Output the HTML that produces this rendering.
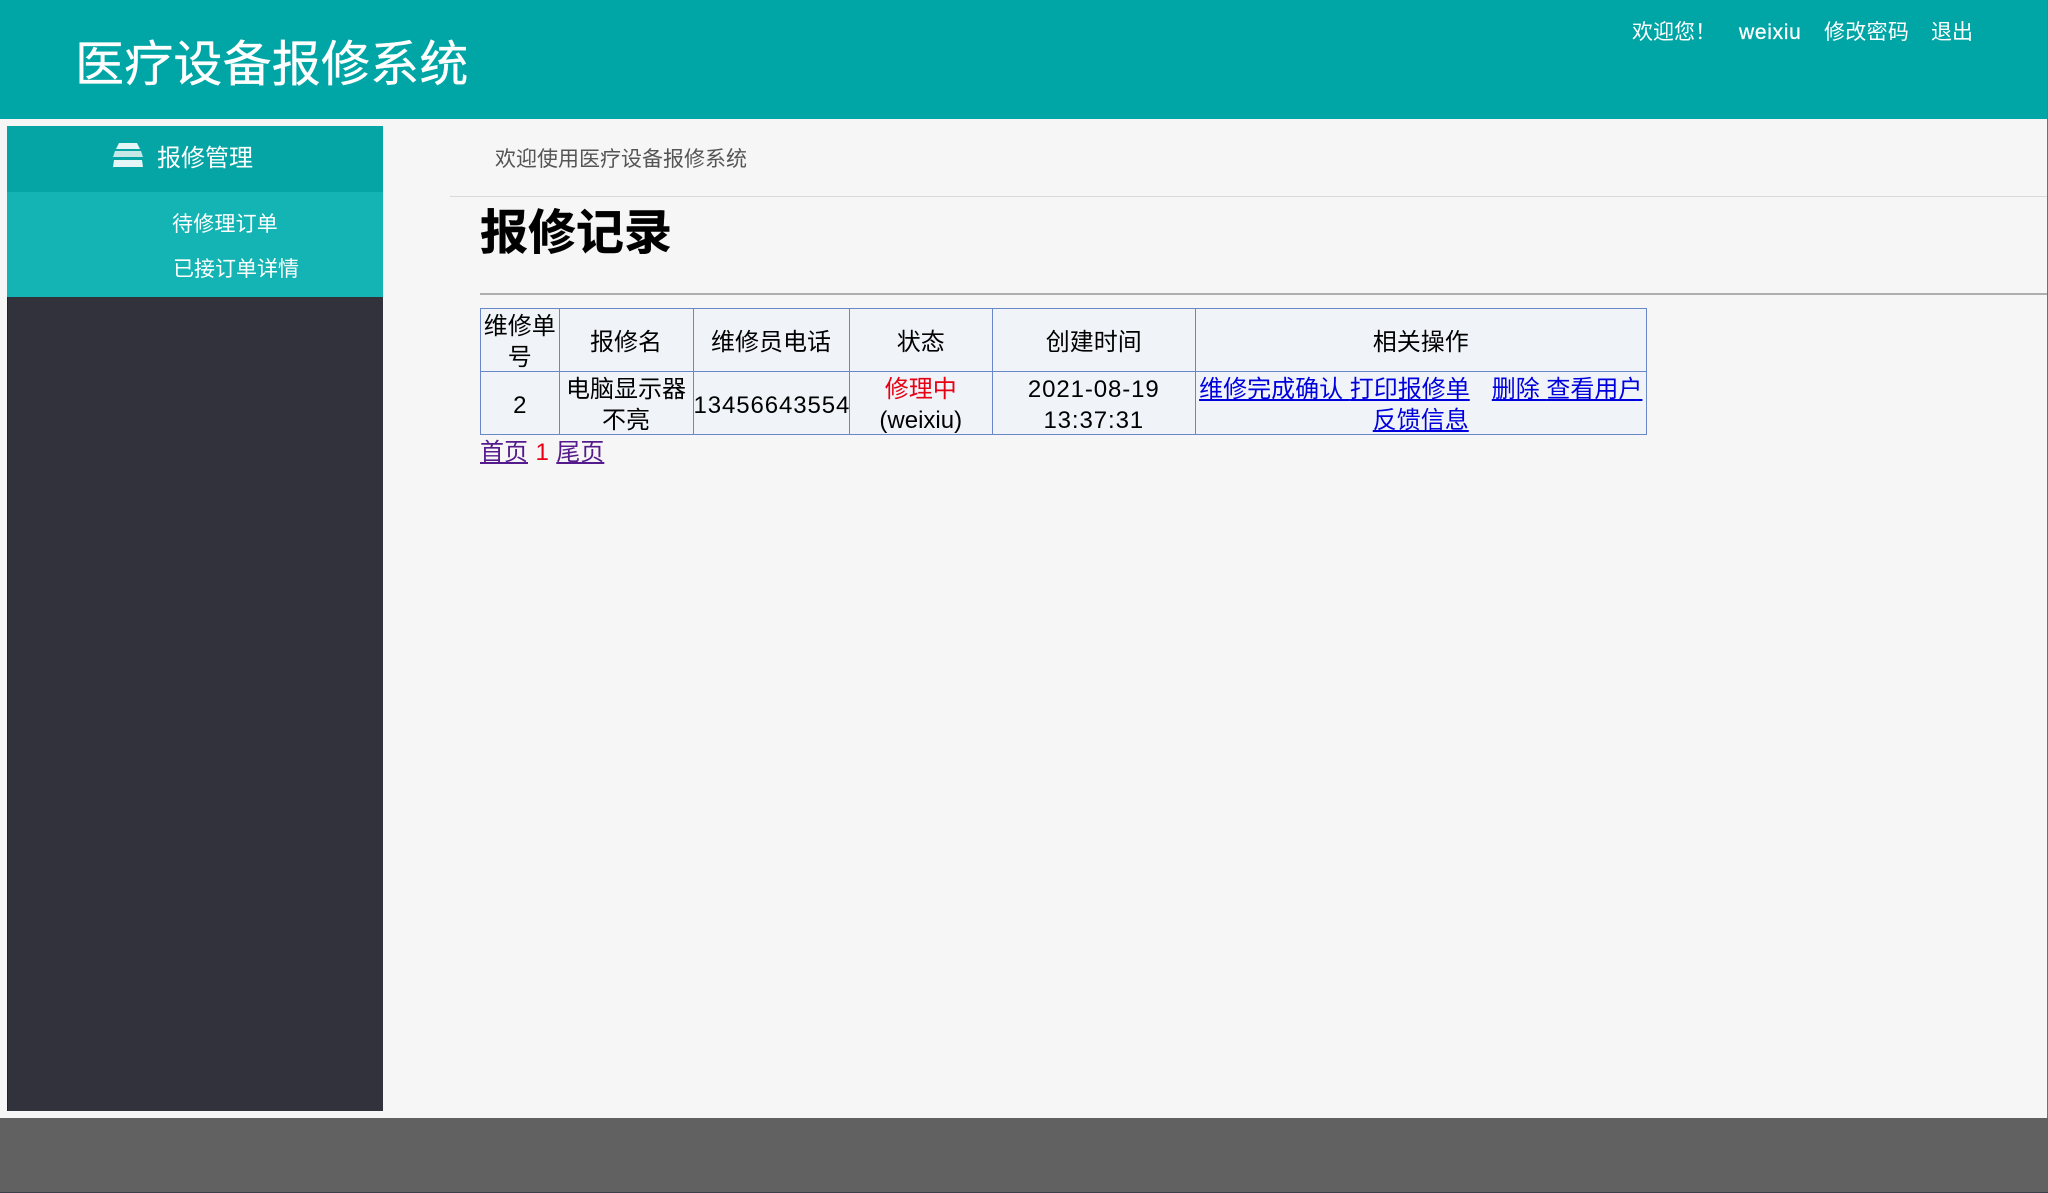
<!DOCTYPE html>
<html lang="zh-CN">
<head>
<meta charset="utf-8">
<title>医疗设备报修系统</title>
<style>
*{box-sizing:border-box}
html,body{margin:0;padding:0;width:2048px;height:1193px;overflow:hidden;background:#f6f6f6;
 font-family:"Liberation Sans","Noto Sans CJK SC",sans-serif;font-size:24px;color:#000}
.a{position:absolute;white-space:nowrap}
#hd{left:0;top:0;width:2048px;height:119px;background:#00a5a5}
#title{left:75px;top:35px;font-size:49px;line-height:60px;color:#fff;font-weight:400;letter-spacing:.2px;-webkit-text-stroke:.3px #fff}
.top{top:18px;font-size:21px;line-height:30px;color:#fff}
#side{left:7px;top:126px;width:376px;height:985px;background:#32323c;border-left:1px solid #22222a}
#sh{left:7px;top:126px;width:376px;height:66px;background:#05a5a5}
#ss{left:7px;top:192px;width:376px;height:105px;background:#14b4b4}
.si{font-size:21px;line-height:30px;color:#fff}
#ft{left:0;top:1118px;width:2048px;height:75px;background:#616161;border-bottom:1px solid #3c3c48}
#edge{left:2047px;top:0;width:1px;height:1118px;background:#707070}
#crumb{left:495px;top:145px;font-size:21px;line-height:30px;color:#555}
#r1{left:450px;top:196px;width:1598px;height:1px;background:#d9d9d9}
h1{position:absolute;margin:0;left:480px;top:200px;font-size:48px;line-height:68px;font-weight:700;white-space:nowrap;-webkit-text-stroke:.4px #000}
#r2{left:480px;top:293px;width:1568px;height:2px;background:#aeaeae}
table{position:absolute;left:480px;top:308px;width:1166px;border-collapse:collapse;table-layout:fixed;background:#f0f4f9;font-size:24px}
td{border:1px solid #6a88c8;padding:0 1px;text-align:center;vertical-align:middle;line-height:31px;white-space:nowrap;overflow:visible}
td>div{position:relative;top:2px}
tr.h td,tr.b td{height:63px}
.n{letter-spacing:.9px}
a{color:#0000dd;text-decoration:underline}
#pg{left:480px;top:437px;font-size:24px;line-height:32px;word-spacing:.8px}
#pg a{color:#551a8b}
#pg span{color:#e60012}
</style>
</head>
<body>
<div class="a" id="hd"></div>
<div class="a" id="title">医疗设备报修系统</div>
<div class="a top" style="left:1632px">欢迎您！</div>
<div class="a top" style="left:1739px;letter-spacing:.7px;-webkit-text-stroke:.3px #fff">weixiu</div>
<div class="a top" style="left:1824px;letter-spacing:.3px">修改密码</div>
<div class="a top" style="left:1931px">退出</div>

<div class="a" id="side"></div>
<div class="a" id="sh"></div>
<div class="a" id="ss"></div>
<svg class="a" style="left:112px;top:142px" width="32" height="26" viewBox="0 0 32 26">
<path d="M7 1H25L28 7H4Z" fill="#e6f5f5"/>
<path d="M3 9H29L31 15H1Z" fill="#c8e8e8"/>
<path d="M2 18H30L31 25H1Z" fill="#e6f5f5"/>
</svg>
<div class="a" style="left:157px;top:141px;font-size:24px;line-height:36px;color:#fff">报修管理</div>
<div class="a si" style="left:172px;top:210px;letter-spacing:.2px">待修理订单</div>
<div class="a si" style="left:173px;top:255px">已接订单详情</div>

<div class="a" id="crumb">欢迎使用医疗设备报修系统</div>
<div class="a" id="r1"></div>
<h1>报修记录</h1>
<div class="a" id="r2"></div>

<table>
<colgroup>
<col style="width:78.5px"><col style="width:134px"><col style="width:156px"><col style="width:143.5px"><col style="width:202.5px"><col style="width:451.5px">
</colgroup>
<tr class="h">
<td><div>维修单<br>号</div></td><td><div>报修名</div></td><td><div>维修员电话</div></td><td><div>状态</div></td><td><div>创建时间</div></td><td><div>相关操作</div></td>
</tr>
<tr class="b">
<td><div>2</div></td>
<td><div>电脑显示器<br>不亮</div></td>
<td class="n" style="padding:0"><div>13456643554</div></td>
<td><div><span style="color:#e60012">修理中</span><br>(weixiu)</div></td>
<td class="n"><div>2021-08-19<br>13:37:31</div></td>
<td><div><a href="#">维修完成确认 </a><a href="#">打印报修单</a><span style="display:inline-block;width:22px"></span><a href="#">删除 </a><a href="#">查看用户</a><br><a href="#">反馈信息</a></div></td>
</tr>
</table>
<div class="a" id="pg"><a href="#">首页</a> <span>1</span> <a href="#">尾页</a></div>

<div class="a" id="edge"></div>
<div class="a" id="ft"></div>
</body>
</html>
